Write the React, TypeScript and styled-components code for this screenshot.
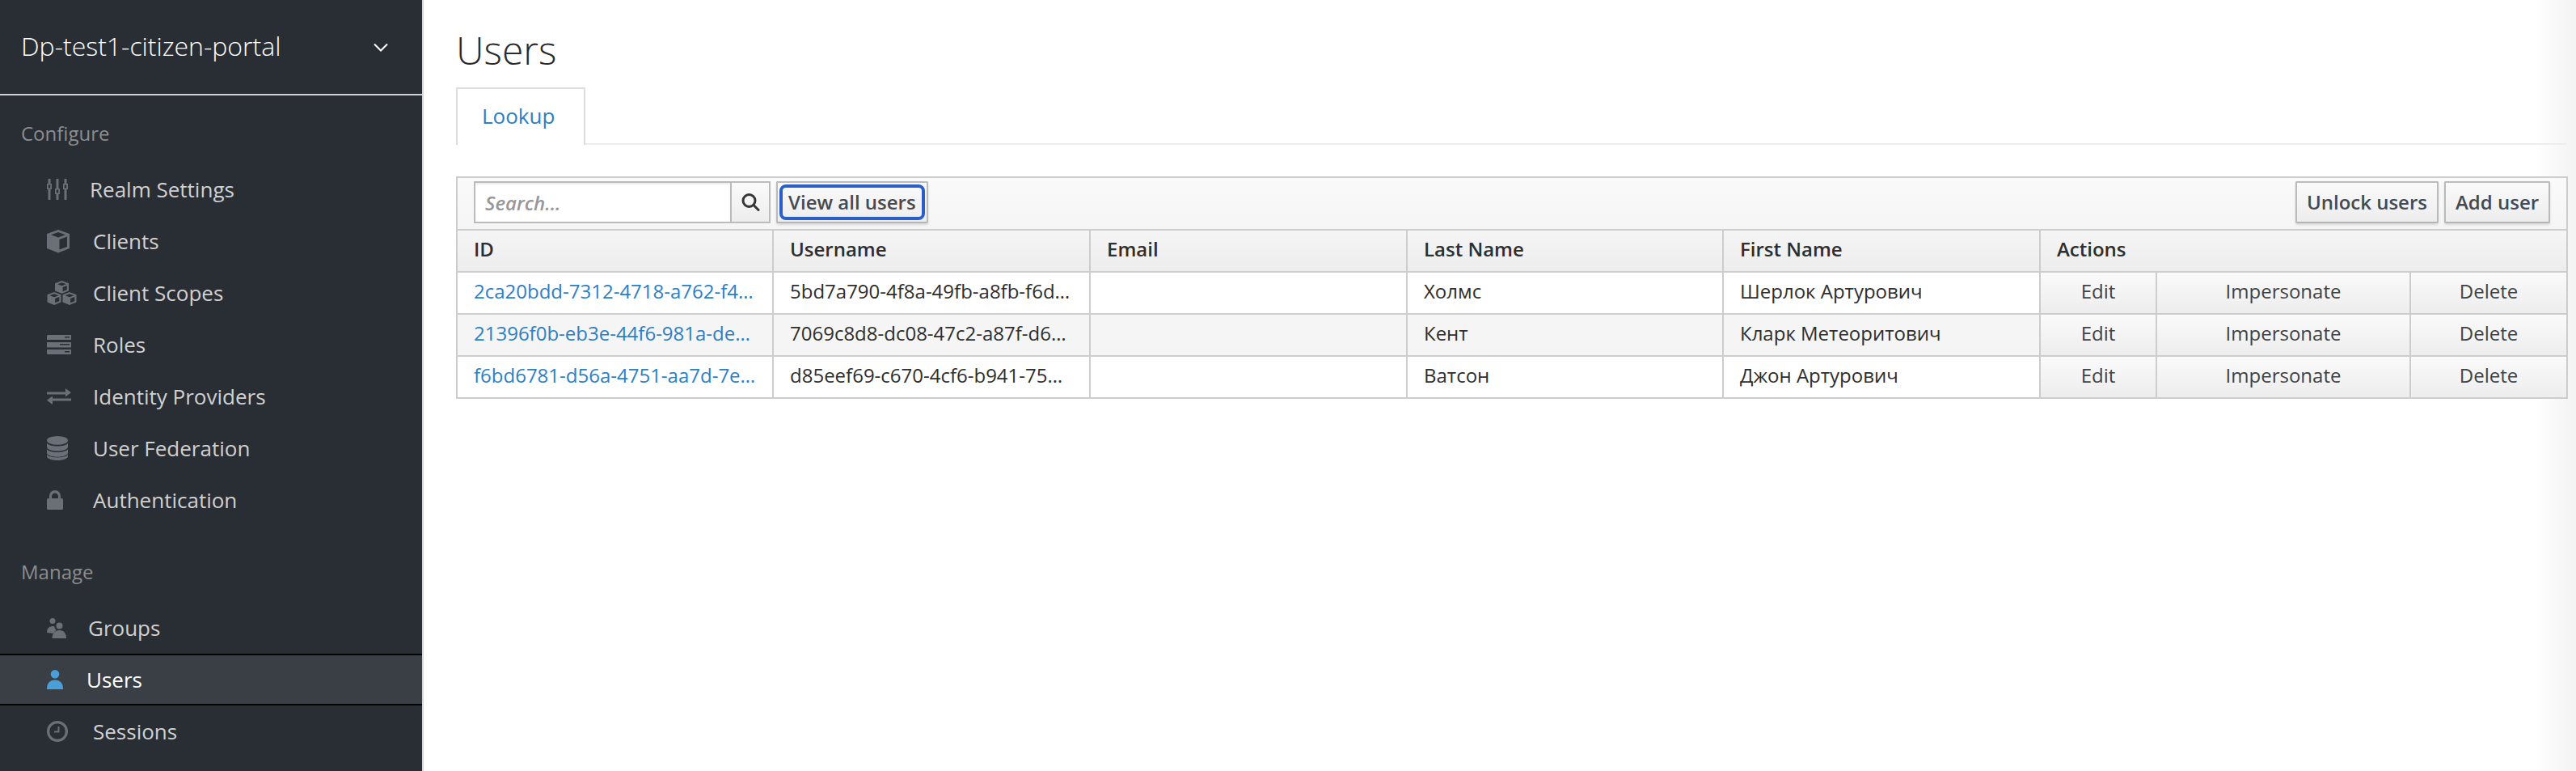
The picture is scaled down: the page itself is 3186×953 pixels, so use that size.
import React from 'react';
import styled, { createGlobalStyle } from 'styled-components';

const GlobalStyle = createGlobalStyle`
  html, body {
    margin: 0;
    padding: 0;
    background: #fff;
  }
  body {
    font-family: 'Open Sans', 'Noto Sans', sans-serif;
    overflow: hidden;
  }
`;

const IconSvg = styled.svg`
  display: block;
  fill: ${(props) => props.color || '#6b6f77'};
`;

const SettingsIcon = () => (
  <IconSvg width="26" height="26" viewBox="0 0 26 26">
    <path d="M1.5 0h3v6h1.5v7H4.5v13h-3V13H0V6h1.5zM1.8 7.6v3.8h2.4V7.6zM11.5 0h3v12h1.5v7h-1.5v7h-3v-7H10v-7h1.5zM11.8 13.6v3.8h2.4v-3.8zM21.5 0h3v6H26v7h-1.5v13h-3V13H20V6h1.5zM21.8 7.6v3.8h2.4V7.6z" fillRule="evenodd" />
  </IconSvg>
);

const cubePath = 'M14 0L28 5v18l-14 5.5L0 23V5zM14 3L5 6.2l9 3.4 9-3.4zM15.5 12v12.6L25 21V8.4z';

const CubeIcon = () => (
  <IconSvg width="28" height="29" viewBox="0 0 28 29">
    <path d={cubePath} fillRule="evenodd" />
  </IconSvg>
);

const CubesIcon = () => (
  <IconSvg width="37" height="31" viewBox="0 0 37 31">
    <g fillRule="evenodd">
      <path d="M18.5 0l8.5 3.2v9.3l-8.5 3.3-8.5-3.3V3.2zM18.5 2.2l-5.4 2 5.4 2 5.4-2zM19.6 8v5.2l5.2-2V6z" />
      <path d="M9 14l8.5 3.2v9.3L9 30 .5 26.5v-9.3zM9 16.2l-5.4 2 5.4 2 5.4-2zM10.1 22v5.2l5.2-2V20z" />
      <path d="M28 14l8.5 3.2v9.3L28 30l-8.5-3.5v-9.3zM28 16.2l-5.4 2 5.4 2 5.4-2zM29.1 22v5.2l5.2-2V20z" />
    </g>
  </IconSvg>
);

const RolesIcon = () => (
  <IconSvg width="30" height="24" viewBox="0 0 30 24">
    <path fillRule="evenodd" d="M1 0h29v6H0V1zM22 2v1.6h6V2zM0 9h30v6.4H0zM16 11v1.6h12V11zM0 18h30v6H1l-1-1zM22 20v1.6h6V20z" />
  </IconSvg>
);

const ExchangeIcon = () => (
  <IconSvg width="30" height="22" viewBox="0 0 30 22">
    <path d="M0 5.500h23V1l7 5.200-7 5.200V8.500H0zM30 13.500v3H7V21L0 15.800l7-5.200v2.900z" />
  </IconSvg>
);

const DatabaseIcon = () => (
  <IconSvg width="26" height="30" viewBox="0 0 26 30">
    <ellipse cx="13" cy="5.400" rx="13" ry="5.400" />
    <path d="M0 8.800c2 2.600 7 3.800 13 3.800s11-1.200 13-3.800v4.600c0 2.800-5.800 5-13 5s-13-2.200-13-5zM0 16.200c2 2.600 7 3.800 13 3.800s11-1.200 13-3.800v4.600c0 2.800-5.800 5-13 5s-13-2.200-13-5zM0 23c2 2.400 7 3.400 13 3.400s11-1 13-3.400v2c0 2.800-5.800 5-13 5s-13-2.200-13-5z" />
  </IconSvg>
);

const LockIcon = () => (
  <IconSvg width="20" height="24" viewBox="0 0 20 24">
    <path fillRule="evenodd" d="M3 10V7.500C3 3.400 6 0 10 0s7 3.400 7 7.500V10h1.500c.8 0 1.500.7 1.500 1.500v11c0 .8-.7 1.500-1.500 1.500h-17C.7 24 0 23.300 0 22.500v-11C0 10.700.7 10 1.500 10zM6 10h8V7.500c0-2.200-1.800-4-4-4s-4 1.800-4 4z" />
  </IconSvg>
);

const GroupsIcon = () => (
  <IconSvg width="24" height="25" viewBox="0 0 24 25">
    <circle cx="7" cy="3.500" r="3.500" />
    <circle cx="15.500" cy="9.500" r="4" />
    <path d="M0 18c0-5 2.500-8 7-8 1 0 1.800.1 2.500.4 0 2 1 3.600 2.500 4.400-2 1-3.400 2.700-3.900 4.200z" />
    <path d="M6.500 25c0-6 3.500-10 9-10s8.500 4 8.500 10z" />
  </IconSvg>
);

const UserIcon = () => (
  <IconSvg width="20" height="24" viewBox="0 0 20 24" color="#4b9fd9">
    <circle cx="10" cy="5.300" r="5.300" />
    <path d="M0 24c0-7.500 3.500-11.500 10-11.500S20 16.500 20 24z" />
  </IconSvg>
);

const ClockIcon = () => (
  <IconSvg width="26" height="26" viewBox="0 0 26 26">
    <path fillRule="evenodd" d="M13 0a13 13 0 1 1 0 26a13 13 0 0 1 0-26zM13 3.200a9.800 9.800 0 1 0 0 19.600a9.800 9.800 0 0 0 0-19.600z" />
    <path d="M13.500 7h2v7.500H9v-2h4.500z" />
  </IconSvg>
);

const SearchIcon = () => (
  <svg width="24" height="22" viewBox="0 0 24 22" fill="none" stroke="#363636" strokeWidth="3">
    <ellipse cx="10.500" cy="9" rx="7.500" ry="7.500" />
    <path d="M16 14.500L22 20.500" strokeLinecap="round" />
  </svg>
);

const Chevron = () => (
  <svg width="18" height="11" viewBox="0 0 18 11" fill="none" stroke="#fff" strokeWidth="2">
    <path d="M1 1.500L9 9.500L17 1.500" />
  </svg>
);

const Page = styled.div`
  display: flex;
  height: 953px;
  overflow: hidden;
`;

const Sidebar = styled.aside`
  flex: 0 0 522px;
  background: #292e34;
  border-right: 2px solid #d9d9d9;
`;

const RealmHeader = styled.div`
  height: 116px;
  display: flex;
  align-items: center;
  justify-content: space-between;
  padding: 0 42px 0 26px;
  border-bottom: 2px solid #d1d1d1;
  color: #fff;
`;

const RealmName = styled.span`
  font-size: 32px;
  font-weight: 300;
  padding-bottom: 3px;
`;

const SectionLabel = styled.div<{ $top: number }>`
  margin-top: ${(props) => props.$top}px;
  margin-bottom: 20px;
  padding-left: 26px;
  height: 34px;
  line-height: 34px;
  font-size: 24px;
  color: #8b8d8f;
`;

const NavItem = styled.a<{ $active?: boolean }>`
  display: flex;
  align-items: center;
  height: ${(props) => (props.$active ? 60 : 64)}px;
  padding-left: 58px;
  font-size: 26px;
  color: ${(props) => (props.$active ? '#fff' : '#d1d1d1')};
  background: ${(props) => (props.$active ? '#393f44' : 'transparent')};
  border-top: ${(props) => (props.$active ? '2px solid #030303' : 'none')};
  border-bottom: ${(props) => (props.$active ? '2px solid #030303' : 'none')};
`;

const NavIcon = styled.span<{ $width: number }>`
  flex: 0 0 ${(props) => props.$width}px;
  display: flex;
`;

const Main = styled.main`
  flex: 1;
  min-width: 0;
  padding: 32px 11px 0 40px;
  background: linear-gradient(to right, #fff calc(100% - 50px), #f4f4f4 calc(100% - 6px));
`;

const Title = styled.h1`
  margin: 0 0 16px;
  height: 60px;
  line-height: 60px;
  font-size: 48px;
  font-weight: 300;
  color: #2b2b2b;
`;

const Tabs = styled.div`
  display: flex;
  height: 69px;
  border-bottom: 2px solid #ededed;
  margin-bottom: 39px;
`;

const Tab = styled.div`
  width: 160px;
  height: 71px;
  box-sizing: border-box;
  padding-left: 30px;
  line-height: 67px;
  font-size: 26px;
  color: #2b7fc7;
  background: #fff;
  border: 2px solid #ddd;
  border-bottom: none;
`;

const Table = styled.table`
  width: 2610px;
  table-layout: fixed;
  border-collapse: collapse;
  border: 2px solid #cdcdcd;
  font-size: 24px;
  color: #2e2e2e;
`;

const ToolbarCell = styled.th`
  padding: 4px 0 7px;
  border: 2px solid #cdcdcd;
  background: linear-gradient(#fafafa, #f5f5f5);
  font-weight: 400;
`;

const Toolbar = styled.div`
  display: flex;
  align-items: center;
  justify-content: space-between;
  padding: 0 20px;
`;

const ToolGroup = styled.div`
  display: flex;
  gap: 7px;
`;

const SearchBox = styled.div`
  display: flex;
  width: 367px;
  height: 52px;
  box-sizing: border-box;
  border: 2px solid #bbb;
  background: #fff;
`;

const SearchInput = styled.input`
  flex: 1;
  min-width: 0;
  border: none;
  outline: none;
  padding: 0 12px;
  font: italic 600 24px 'Open Sans', sans-serif;
  box-shadow: inset 0 2px 2px rgba(3, 3, 3, 0.08);

  &::placeholder {
    color: #979797;
    opacity: 1;
  }
`;

const SearchButton = styled.div`
  flex: 0 0 46px;
  display: flex;
  align-items: center;
  justify-content: center;
  border-left: 2px solid #bbb;
  background: linear-gradient(#fafafa, #ededed);
`;

const Button = styled.button<{ $focused?: boolean }>`
  position: relative;
  height: 52px;
  box-sizing: border-box;
  padding: 0 ${(props) => (props.$focused ? 13 : 12)}px 2px;
  font: 600 24px 'Open Sans', sans-serif;
  color: #454a50;
  border: 2px solid #bbb;
  border-bottom-color: #b5b5b5;
  border-radius: 2px;
  background: linear-gradient(#fafafa, #ededed);
  box-shadow: 0 2px 3px rgba(3, 3, 3, 0.12);

  &::after {
    content: '';
    display: ${(props) => (props.$focused ? 'block' : 'none')};
    position: absolute;
    inset: 2px;
    border: 4px solid #2a5fc9;
    border-radius: 8px;
  }
`;

const HeadCell = styled.th`
  height: 45px;
  padding: 0 20px 5px;
  text-align: left;
  font-weight: 600;
  border: 2px solid #cdcdcd;
  background: linear-gradient(#f5f5f5, #ededed);
`;

const Row = styled.tr`
  &:nth-child(odd) td {
    background: #fff;
  }
  &:nth-child(even) td {
    background: #f5f5f5;
  }
`;

const Cell = styled.td`
  height: 45px;
  padding: 0 20px 5px;
  white-space: nowrap;
  overflow: hidden;
  border: 2px solid #cdcdcd;
`;

const IdLink = styled.a`
  color: #2b7fc7;
`;

const ActionCell = styled.td`
  height: 45px;
  padding: 0 0 5px;
  text-align: center;
  color: #3f4347;
  border: 2px solid #cdcdcd;
  ${Row} &&& {
    background: linear-gradient(#fafafa, #ededed);
  }
`;

const configureItems = [
  { label: 'Realm Settings', width: 53, icon: <SettingsIcon /> },
  { label: 'Clients', width: 57, icon: <CubeIcon /> },
  { label: 'Client Scopes', width: 57, icon: <CubesIcon /> },
  { label: 'Roles', width: 57, icon: <RolesIcon /> },
  { label: 'Identity Providers', width: 57, icon: <ExchangeIcon /> },
  { label: 'User Federation', width: 57, icon: <DatabaseIcon /> },
  { label: 'Authentication', width: 57, icon: <LockIcon /> },
];

const users = [
  {
    id: '2ca20bdd-7312-4718-a762-f4…',
    username: '5bd7a790-4f8a-49fb-a8fb-f6d…',
    lastName: 'Холмс',
    firstName: 'Шерлок Артурович',
  },
  {
    id: '21396f0b-eb3e-44f6-981a-de…',
    username: '7069c8d8-dc08-47c2-a87f-d6…',
    lastName: 'Кент',
    firstName: 'Кларк Метеоритович',
  },
  {
    id: 'f6bd6781-d56a-4751-aa7d-7e…',
    username: 'd85eef69-c670-4cf6-b941-75…',
    lastName: 'Ватсон',
    firstName: 'Джон Артурович',
  },
];

const App = () => {
  return (
    <Page>
      <GlobalStyle />
      <Sidebar>
        <RealmHeader>
          <RealmName>Dp-test1-citizen-portal</RealmName>
          <Chevron />
        </RealmHeader>
        <SectionLabel $top={30}>Configure</SectionLabel>
        {configureItems.map((item) => (
          <NavItem key={item.label}>
            <NavIcon $width={item.width}>{item.icon}</NavIcon>
            {item.label}
          </NavItem>
        ))}
        <SectionLabel $top={40}>Manage</SectionLabel>
        <NavItem>
          <NavIcon $width={51}>
            <GroupsIcon />
          </NavIcon>
          Groups
        </NavItem>
        <NavItem $active>
          <NavIcon $width={49}>
            <UserIcon />
          </NavIcon>
          Users
        </NavItem>
        <NavItem>
          <NavIcon $width={57}>
            <ClockIcon />
          </NavIcon>
          Sessions
        </NavItem>
      </Sidebar>
      <Main>
        <Title>Users</Title>
        <Tabs>
          <Tab>Lookup</Tab>
        </Tabs>
        <Table>
          <colgroup>
            <col width="391" />
            <col width="392" />
            <col width="392" />
            <col width="391" />
            <col width="392" />
            <col width="144" />
            <col width="314" />
            <col width="194" />
          </colgroup>
          <thead>
            <tr>
              <ToolbarCell colSpan={8}>
                <Toolbar>
                  <ToolGroup>
                    <SearchBox>
                      <SearchInput placeholder="Search..." />
                      <SearchButton>
                        <SearchIcon />
                      </SearchButton>
                    </SearchBox>
                    <Button $focused>View all users</Button>
                  </ToolGroup>
                  <ToolGroup>
                    <Button>Unlock users</Button>
                    <Button>Add user</Button>
                  </ToolGroup>
                </Toolbar>
              </ToolbarCell>
            </tr>
            <tr>
              <HeadCell>ID</HeadCell>
              <HeadCell>Username</HeadCell>
              <HeadCell>Email</HeadCell>
              <HeadCell>Last Name</HeadCell>
              <HeadCell>First Name</HeadCell>
              <HeadCell colSpan={3}>Actions</HeadCell>
            </tr>
          </thead>
          <tbody>
            {users.map((user) => (
              <Row key={user.id}>
                <Cell>
                  <IdLink>{user.id}</IdLink>
                </Cell>
                <Cell>{user.username}</Cell>
                <Cell />
                <Cell>{user.lastName}</Cell>
                <Cell>{user.firstName}</Cell>
                <ActionCell>Edit</ActionCell>
                <ActionCell>Impersonate</ActionCell>
                <ActionCell>Delete</ActionCell>
              </Row>
            ))}
          </tbody>
        </Table>
      </Main>
    </Page>
  );
};

export default App;
